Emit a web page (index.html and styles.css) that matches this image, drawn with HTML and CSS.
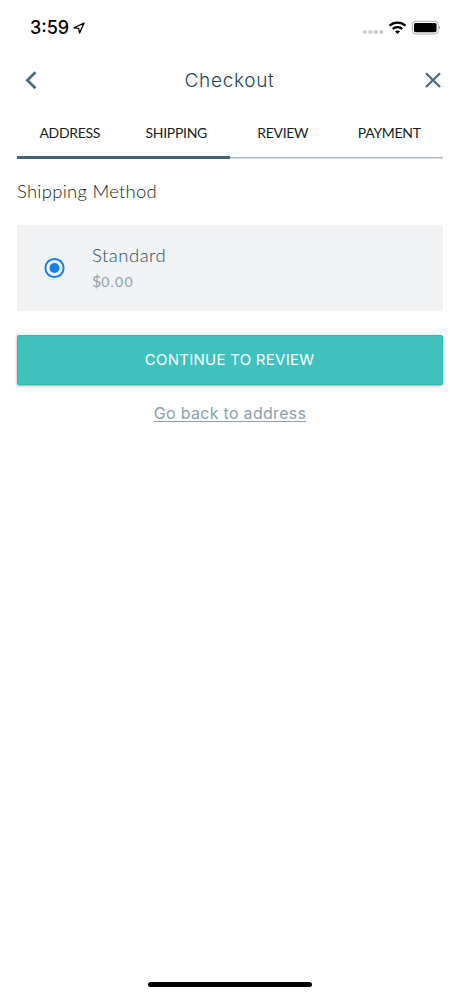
FILE: index.html
```html
<!DOCTYPE html>
<html lang="en">
<head>
<meta charset="utf-8">
<title>Checkout</title>
<link rel="stylesheet" href="styles.css">
</head>
<body>
<div class="screen">
  <div class="status">
    <span class="time">3:59</span>
    <svg class="location" width="12" height="12" viewBox="0 0 12 12"><path d="M1 5.8 11 1 6.6 11 5.7 6.3Z" fill="none" stroke="#000" stroke-width="1.3" stroke-linejoin="round"/></svg>
    <svg class="indicators" width="80" height="16" viewBox="0 0 80 16">
      <g fill="#c9c9c9"><circle cx="4.8" cy="12" r="2.1"/><circle cx="10.3" cy="12" r="2.1"/><circle cx="15.8" cy="12" r="2.1"/><circle cx="21.3" cy="12" r="2.1"/></g>
      <g fill="none" stroke="#000" stroke-width="2.3"><path d="M29.5 5.6a12 12 0 0 1 16 0"/><path d="M32.7 9a7.2 7.2 0 0 1 9.6 0"/></g>
      <path d="M35 11.5a4 4 0 0 1 5 0L37.5 14Z"/>
      <rect x="52.4" y="1.2" width="25.8" height="12.8" rx="3.4" fill="none" stroke="#aaa"/>
      <rect x="54" y="3" width="22.5" height="9.2" rx="1.6"/>
      <path d="M79.3 5.8q1.5 1.8 0 3.7Z" fill="#777"/>
    </svg>
  </div>
  <header class="header">
    <svg width="28" height="28" viewBox="0 0 28 28"><path d="m18.5 6.2-8.2 8 8.2 8" fill="none" stroke="#4b6b79" stroke-width="2.7"/></svg>
    <h1 class="title">Checkout</h1>
    <svg width="20" height="28" viewBox="0 0 20 28"><path d="m3 7.2 14 13.8m0-13.8L3 21" fill="none" stroke="#4b6b79" stroke-width="2.3"/></svg>
  </header>
  <nav class="tabs">
    <div class="tab done">ADDRESS</div>
    <div class="tab done">SHIPPING</div>
    <div class="tab">REVIEW</div>
    <div class="tab">PAYMENT</div>
  </nav>
  <main>
    <h2 class="heading">Shipping Method</h2>
    <div class="option">
      <svg width="22" height="22" viewBox="0 0 22 22"><circle cx="10.5" cy="11" r="9.1" fill="none" stroke="#1580e8" stroke-width="2"/><circle cx="10.5" cy="11" r="5" fill="#1580e8"/></svg>
      <div class="details">
        <div class="name">Standard</div>
        <div class="price">$<span class="amount">0.00</span></div>
      </div>
    </div>
    <button class="continue">CONTINUE TO REVIEW</button>
    <div class="back"><a class="back-link">Go back to address</a></div>
  </main>
  <div class="home"></div>
</div>
</body>
</html>
```
FILE: styles.css
```css
* { box-sizing: border-box; }
body { margin: 0; background: #fff; }
.screen { width: 460px; height: 996px; display: flex; flex-direction: column; padding: 0 17px; font-family: Inter, sans-serif; }
.status { height: 56px; display: flex; align-items: center; padding-left: 13px; }
.time { font-size: 18px; font-weight: 500; line-height: 20px; }
.location { margin-left: 4px; }
.indicators { margin-left: auto; margin-right: 3px; }
.header { height: 48px; display: flex; align-items: center; justify-content: space-between; }
.title { margin: 0; padding: 2px 9px 0 0; font-size: 19px; font-weight: 300; line-height: 28px; letter-spacing: .7px; color: #1f4557; }
.tabs { height: 55px; display: grid; grid-template-columns: repeat(4, 1fr); }
.tab { display: flex; justify-content: center; padding: 20px 1px 0 0; font-family: Lato, sans-serif; font-size: 14px; line-height: 18px; letter-spacing: -.3px; color: #141d22; background: linear-gradient(#b0bbc1, #b0bbc1) 0 52.5px / 100% 1.5px no-repeat; }
.tab.done { background: linear-gradient(#426372, #426372) 0 51.5px / 100% 3px no-repeat; }
.heading { margin: 19px 0 0; font-family: Lato, sans-serif; font-size: 18.5px; font-weight: 300; line-height: 26px; letter-spacing: .25px; color: #141f26; }
.option { margin-top: 21px; height: 86px; display: flex; align-items: center; padding-left: 27px; background: #f0f2f4; }
.details { margin-left: 26px; font-family: Lato, sans-serif; }
.name { font-size: 18.5px; font-weight: 300; line-height: 25px; letter-spacing: .5px; color: #2c4d5b; }
.price { font-size: 16px; font-weight: 400; line-height: 25px; color: #8fa2ad; }
.amount { font-size: 14px; letter-spacing: 1.2px; }
.continue { display: block; width: 426px; height: 50px; margin-top: 24px; padding: 0 1px 0 0; border: 1px solid #29bab6; border-radius: 2px; background: #40c1bd; box-shadow: 0 1px 3px rgba(0, 0, 0, .35); color: #fff; font: 400 15px/24px Inter, sans-serif; letter-spacing: .25px; }
.back { margin-top: 18px; display: flex; justify-content: center; }
.back-link { height: 19px; font-size: 16px; line-height: 20px; letter-spacing: .3px; color: #8c9faa; border-bottom: 1px solid #8c9faa; }
.home { width: 164px; height: 5px; margin: auto auto 9px; border-radius: 3px; background: #000; }
```
